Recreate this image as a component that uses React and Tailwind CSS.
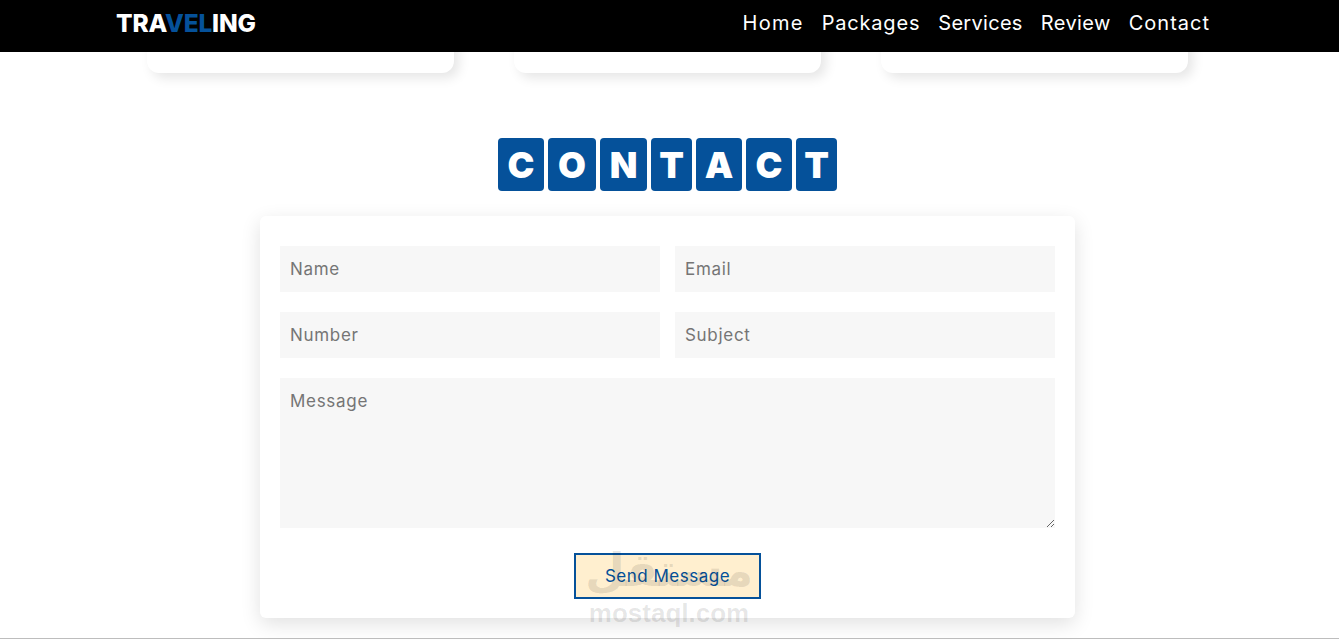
import React from 'react';

const navLinks = [
  { label: 'Home', track: 'tracking-[1.3px]' },
  { label: 'Packages', track: 'tracking-[0.8px]' },
  { label: 'Services', track: 'tracking-[0.3px]' },
  { label: 'Review', track: 'tracking-[0.4px]' },
  { label: 'Contact', track: 'tracking-[1px]' },
];

const letters = [
  { ch: 'C', w: 'w-[46px]' },
  { ch: 'O', w: 'w-[48px]' },
  { ch: 'N', w: 'w-[47px]' },
  { ch: 'T', w: 'w-[41px]' },
  { ch: 'A', w: 'w-[46px]' },
  { ch: 'C', w: 'w-[46px]' },
  { ch: 'T', w: 'w-[41px]' },
];

const fieldClass =
  'w-full h-[46px] bg-[#f7f7f7] px-[10px] text-[17px] tracking-[0.7px] text-[#333] outline-none placeholder:text-[#757575]';

function Card() {
  return <div className="w-[307px] h-[40px] -mt-[19px] rounded-xl bg-white shadow-[5px_5px_12px_rgba(0,0,0,0.1)]" />;
}

export default function App() {
  return (
    <div className="relative h-[640px] w-full overflow-hidden bg-white font-['Inter',sans-serif] text-black">
      <header className="relative z-10 flex h-[52px] items-center justify-between bg-black pb-[6px] pl-[116px] pr-[129px]">
        <a className="text-[24.5px] leading-none font-extrabold tracking-[-0.2px] text-white">
          TRA<span className="text-[#05519a]">VEL</span>ING
        </a>
        <nav className="flex gap-[18px]">
          {navLinks.map((l) => (
            <a key={l.label} className={`${l.track} text-[20px] leading-none text-white`}>
              {l.label}
            </a>
          ))}
        </nav>
      </header>

      <div className="w-[1335px]">
        <div className="flex h-[21px] justify-center gap-[60px]">
          <Card />
          <Card />
          <Card />
        </div>

        <h1 className="mt-[65px] flex justify-center gap-[4px]">
          {letters.map((l, i) => (
            <span
              key={i}
              className={`${l.w} flex h-[53px] items-center justify-center rounded-[4px] bg-[#05519a] text-[36px] leading-none font-black text-white`}
            >
              {l.ch}
            </span>
          ))}
        </h1>

        <form className="mx-auto mt-[25px] flex w-[815px] flex-col gap-[20px] rounded-md bg-white px-[20px] pt-[30px] pb-[19px] shadow-[0_6px_20px_rgba(0,0,0,0.12)]">
          <div className="flex gap-[15px]">
            <input className={fieldClass} placeholder="Name" />
            <input className={fieldClass} placeholder="Email" />
          </div>
          <div className="flex gap-[15px]">
            <input className={fieldClass} placeholder="Number" />
            <input className={fieldClass} placeholder="Subject" />
          </div>
          <textarea
            className="block h-[150px] w-full bg-[#f7f7f7] px-[10px] pt-[11px] pb-[9px] text-[17px] tracking-[0.7px] text-[#333] outline-none placeholder:text-[#757575]"
            placeholder="Message"
          />
          <button
            type="button"
            className="mx-auto mt-[5px] h-[46px] w-[187px] border-2 border-[#05519a] bg-[#ffefcf] pt-[2px] text-[17px] tracking-[0.5px] text-[#05519a]"
          >
            Send Message
          </button>
        </form>
      </div>

      {/* watermark over the button */}
      <div className="pointer-events-none absolute left-[549px] top-[541px] z-20 flex w-[240px] flex-col items-center text-[#000]/10">
        <span dir="rtl" className="font-['DejaVu_Sans',sans-serif] text-[46px] leading-[59px] font-bold">
          مستقل
        </span>
        <span className="font-['Liberation_Sans',sans-serif] text-[26px] leading-[26px] font-bold">mostaql.com</span>
      </div>

      <div className="absolute bottom-[1px] left-0 h-px w-full bg-[#bdbdbd]" />
    </div>
  );
}
